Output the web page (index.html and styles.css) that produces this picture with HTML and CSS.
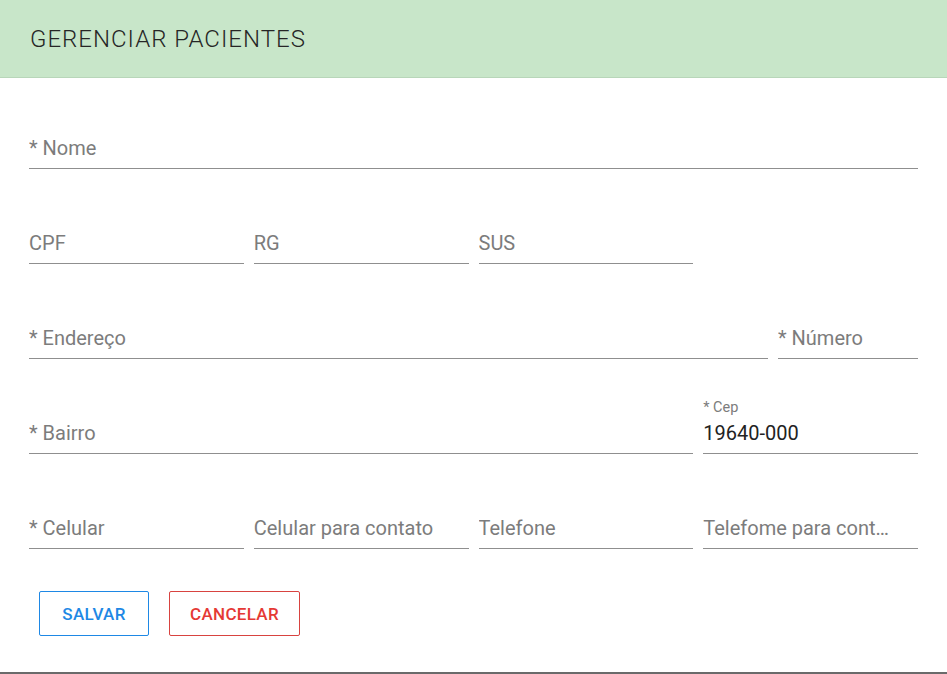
FILE: index.html
```html
<!DOCTYPE html>
<html lang="pt">
<head>
<meta charset="utf-8">
<title>Gerenciar Pacientes</title>
<link rel="stylesheet" href="styles.css">
</head>
<body>
<div class="card">
  <header class="header">
    <h1 class="title">GERENCIAR PACIENTES</h1>
  </header>
  <form class="form">
    <div class="row">
      <div class="field grow"><div class="ph">* Nome</div></div>
    </div>
    <div class="row">
      <div class="field col"><div class="ph">CPF</div></div>
      <div class="field col"><div class="ph">RG</div></div>
      <div class="field col"><div class="ph">SUS</div></div>
    </div>
    <div class="row">
      <div class="field grow"><div class="ph">* Endereço</div></div>
      <div class="field num"><div class="ph">* Número</div></div>
    </div>
    <div class="row">
      <div class="field grow"><div class="ph">* Bairro</div></div>
      <div class="field col">
        <span class="float">* Cep</span>
        <div class="value">19640-000</div>
      </div>
    </div>
    <div class="row">
      <div class="field col"><div class="ph">* Celular</div></div>
      <div class="field col"><div class="ph">Celular para contato</div></div>
      <div class="field col"><div class="ph">Telefone</div></div>
      <div class="field col"><div class="ph">Telefome para contato</div></div>
    </div>
    <div class="actions">
      <button type="button" class="btn btn-save">SALVAR</button>
      <button type="button" class="btn btn-cancel">CANCELAR</button>
    </div>
  </form>
</div>
</body>
</html>
```
FILE: styles.css
```css
* { box-sizing: border-box; }
html, body { margin: 0; padding: 0; background: #ffffff; }
body { font-family: Roboto, "Noto Sans", "Liberation Sans", sans-serif; }

.card {
  height: 674px;
  border-bottom: 2px solid #6a6a6a;
  background: #fff;
}

.header {
  height: 78px;
  background: #c8e6c9;
  border-bottom: 1px solid #b8d6b9;
  display: flex;
  align-items: center;
  padding-left: 30px;
}
.title {
  margin: 0;
  font-size: 24px;
  font-weight: 300;
  color: #262626;
  letter-spacing: 1px;
  line-height: 28px;
}

.form {
  padding: 35px 29px 0 29px;
  display: flex;
  flex-direction: column;
  gap: 39px;
}

.row {
  display: flex;
  gap: 10px;
}

.field {
  position: relative;
  height: 56px;
  border-bottom: 1px solid #8f8f8f;
  display: flex;
  flex-direction: column;
  justify-content: flex-end;
  padding-bottom: 8px;
}
.grow { flex: 1; }
.col { width: 214.75px; flex: none; }
.num { width: 140px; flex: none; }

.ph, .value {
  font-size: 20px;
  line-height: 24px;
  white-space: nowrap;
}
.ph {
  color: #7c7c7c;
  max-width: calc(100% - 24px);
  overflow: hidden;
  text-overflow: ellipsis;
}
.value { color: #222; }

.float {
  position: absolute;
  top: 2px;
  left: 0;
  font-size: 14.5px;
  line-height: 16px;
  color: #7c7c7c;
}

.actions {
  display: flex;
  gap: 20px;
  padding-left: 10px;
  margin-top: 3px;
}
.btn {
  height: 45px;
  padding: 0;
  background: #fff;
  border-radius: 2px;
  font-family: Roboto, "Noto Sans", "Liberation Sans", sans-serif;
  font-size: 17px;
  letter-spacing: 0.3px;
  font-weight: 500;
  cursor: pointer;
}
.btn-save { width: 110px; color: #1e88e5; border: 1px solid #1e88e5; }
.btn-cancel { width: 131px; color: #e53935; border: 1px solid #d84340; }
```
